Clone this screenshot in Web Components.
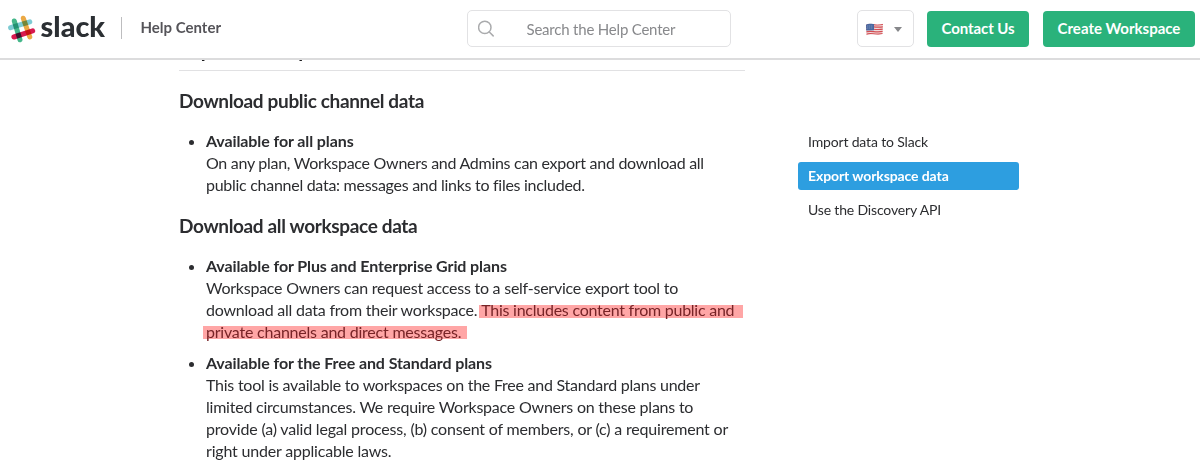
<!DOCTYPE html>
<html lang="en">
<head>
<meta charset="utf-8">
<title>Help Center</title>
<style>
html,body{margin:0;height:468px;overflow:hidden;background:#fff}
body{font-family:Lato,"Liberation Sans",sans-serif;color:#2c2d30}
</style>
</head>
<body>
<help-page></help-page>
<script>
const define=(name,html)=>{
  const t=document.createElement('template');
  t.innerHTML=html;
  customElements.define(name,class extends HTMLElement{
    constructor(){super();this.attachShadow({mode:'open'}).append(t.content.cloneNode(true));}
  });
};

define('slack-logo',`<style>:host{display:block;width:98px;height:32px}svg{display:block;overflow:visible}.m{mix-blend-mode:multiply}</style>
<svg width="98" height="32" viewBox="0 0 98 32">
<g stroke-width="5" stroke-linecap="round" fill="none" style="isolation:isolate">
<path class="m" d="M15.3 7.2L21.8 26" stroke="#eba945"/>
<path class="m" d="M6.3 10L12 28.8" stroke="#45b78a"/>
<path class="m" d="M2.6 16.7L21.8 10.9" stroke="#7dcbd3"/>
<path class="m" d="M5.9 26L24.7 19.9" stroke="#d8194e"/>
</g>
<text x="32.6" y="25.8" font-family="Lato" font-weight="900" font-size="28.5" fill="#2b2f33" textLength="64.5" lengthAdjust="spacingAndGlyphs">slack</text>
</svg>`);

define('search-box',`<style>:host{box-sizing:border-box;display:flex;align-items:center;width:264px;height:37px;border:1px solid #e2e2e4;border-radius:5px;padding-left:10px;font-size:15px;letter-spacing:-.2px;color:#88898c;background:#fff}
svg{flex:none;margin-right:31.5px}span{line-height:20px;padding-top:1px;white-space:nowrap}</style>
<svg width="17" height="18" viewBox="0 0 17 18" fill="none" stroke="#aaabad" stroke-width="1.5" stroke-linecap="round"><circle cx="6.8" cy="7.4" r="6.2"/><path d="M11.3 12L15.2 15.9"/></svg><span><slot></slot></span>`);

define('locale-picker',`<style>:host{box-sizing:border-box;display:flex;align-items:center;width:57px;height:37px;border:1px solid #e2e2e4;border-radius:5px;padding:1px 0 0 8px;background:#fff}svg{display:block}.a{margin:1px 0 0 11px}</style>
<svg width="17" height="13" viewBox="0 0 17 13"><defs><clipPath id="f"><path d="M0 1.8C4-.6 8 2.6 17 .8L16.5 11C11 13 7 9.8.5 12.3Z"/></clipPath></defs>
<g clip-path="url(#f)"><path fill="#f0dcdc" d="M0 0h17v13H0z"/><path d="M0 2.1C5 .2 9 3 17 1.5M0 4.4C5 2.5 9 5.3 17 3.8M0 6.7C5 4.8 9 7.6 17 6.1M0 9C5 7.1 9 9.9 17 8.4M0 11.3C5 9.4 9 12.2 17 10.7" stroke="#d34c52" stroke-width="1.2" fill="none"/><path d="M0 0h8v7.2L0 7.6z" fill="#4867a0"/><path d="M1.3 3h6M1.3 5h6" stroke="#a6b6d3" stroke-width=".7" stroke-dasharray="1 1"/></g></svg>
<svg class="a" width="8" height="5" viewBox="0 0 8 5"><path d="M0 0h8L4 5z" fill="#86878a"/></svg>`);

define('action-button',`<style>:host{box-sizing:border-box;display:flex;align-items:center;justify-content:center;width:var(--w);height:36px;border-radius:4px;background:#2ab27b;color:#fff;font-weight:700;font-size:15px;line-height:20px;white-space:nowrap;padding-bottom:2px}</style><slot></slot>`);

define('help-header',`<style>:host{box-sizing:border-box;position:relative;z-index:1;display:flex;align-items:flex-start;height:60px;padding:10px 5px 0 8px;background:#fff;border-bottom:2px solid #dcdcdd}
slack-logo{margin-top:1px}.bar{width:1px;height:22px;margin:7px 0 0 15px;background:#bdbdbf}.name{margin:7px 0 0 18.5px;font-size:15px;font-weight:700;line-height:20px;color:#555459;width:81px;white-space:nowrap}
search-box{margin-left:245.5px}.right{display:flex;margin-left:auto}action-button{margin-top:1px}.c{--w:102px;margin-left:13px;letter-spacing:-.07px}.w{--w:152px;margin-left:14px}</style>
<slack-logo></slack-logo><div class="bar"></div><div class="name">Help Center</div><search-box>Search the Help Center</search-box>
<div class="right"><locale-picker></locale-picker><action-button class="c">Contact Us</action-button><action-button class="w">Create Workspace</action-button></div>`);

define('article-section',`<style>:host{display:block}h3{margin:0;font-size:19px;line-height:26px;font-weight:700;white-space:nowrap;letter-spacing:-.35px}ul{margin:0;padding:0 0 0 27px}</style><h3><slot name="title"></slot></h3><ul><slot></slot></ul>`);

define('plan-item',`<style>:host{display:list-item;list-style:disc;margin-top:9px;font-size:16px;line-height:22px;white-space:nowrap}b{display:block;letter-spacing:-.1px}</style><b><slot name="plan"></slot></b><slot></slot>`);

define('text-line',`<style>:host{display:block;letter-spacing:-.24px}:host([tight]){letter-spacing:-.28px}:host([loose]){letter-spacing:-.19px}</style><slot></slot>`);

define('mark-text',`<style>:host{color:#782427;background:linear-gradient(#ffa6a6,#ffa6a6) no-repeat 0 var(--t,4px)/100% 13px;padding:0 var(--r,9px) 0 var(--l,2px);margin-left:calc(-1 * var(--l,2px))}</style><slot></slot>`);

define('help-article',`<style>:host{display:block;width:566px}h2{margin:-24px 0 0;height:34px;border-bottom:1px solid #e1e1e3;font-size:20px;line-height:26px;font-weight:700;color:#1c1c1e;letter-spacing:-.05px}
article-section{margin-top:17px}plan-item.first{margin-top:16px}</style>
<h2>Export data options</h2>
<article-section><span slot="title">Download public channel data</span>
<plan-item class="first"><span slot="plan">Available for all plans</span><text-line tight>On any plan, Workspace Owners and Admins can export and download all</text-line><text-line tight>public channel data: messages and links to files included.</text-line></plan-item></article-section>
<article-section><span slot="title">Download all workspace data</span>
<plan-item class="first"><span slot="plan">Available for Plus and Enterprise Grid plans</span><text-line>Workspace Owners can request access to a self-service export tool to</text-line><text-line style="letter-spacing:-.225px">download all data from their workspace. <mark-text style="--t:5px;letter-spacing:-.25px">This includes content from public and</mark-text></text-line><text-line><mark-text style="--l:3px;--r:6px;letter-spacing:-.22px">private channels and direct messages.</mark-text></text-line></plan-item>
<plan-item><span slot="plan">Available for the Free and Standard plans</span><text-line>This tool is available to workspaces on the Free and Standard plans under</text-line><text-line style="letter-spacing:-.225px">limited circumstances. We require Workspace Owners on these plans to</text-line><text-line loose>provide (a) valid legal process, (b) consent of members, or (c) a requirement or</text-line><text-line loose>right under applicable laws.</text-line></plan-item></article-section>`);

define('nav-item',`<style>:host{display:block;box-sizing:border-box;height:28px;padding:4px 10px;border-radius:3px;font-size:14px;line-height:20px;white-space:nowrap;letter-spacing:-.16px}:host([active]){background:#2d9ee0;color:#fff;font-weight:700;letter-spacing:-.1px}</style><slot></slot>`);

define('side-nav',`<style>:host{display:flex;flex-direction:column;gap:6px;width:221px}</style><nav-item>Import data to Slack</nav-item><nav-item active>Export workspace data</nav-item><nav-item>Use the Discovery API</nav-item>`);

define('help-page',`<style>:host{display:block;width:1200px;height:468px;overflow:hidden}main{display:flex;padding-left:179px}side-nav{margin:68px 0 0 53px}</style><help-header></help-header><main><help-article></help-article><side-nav></side-nav></main>`);
</script>
</body>
</html>
